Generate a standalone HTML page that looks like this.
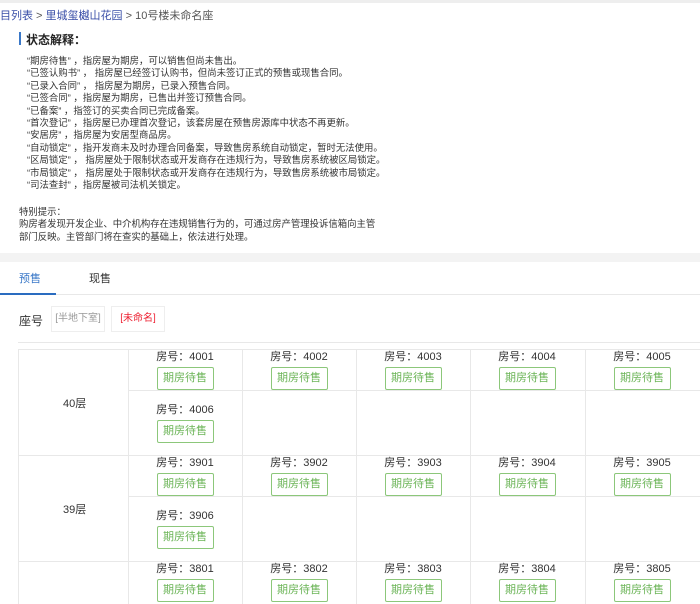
<!DOCTYPE html>
<html><head><meta charset="utf-8"><style>
*{margin:0;padding:0;box-sizing:border-box}
body{width:700px;height:604px;overflow:hidden;background:#fff;font-family:"Liberation Sans","Noto Sans CJK SC",sans-serif;color:#333;position:relative}
.a{position:absolute;white-space:nowrap}
.ln{position:absolute;background:#e8e8e8}
.exp div{height:12.4px;line-height:12.4px;font-size:9.4px;color:#333}
.cell{position:absolute;width:114px;text-align:center;font-size:11px;color:#333}
.btn{display:block;margin:3px auto 0;width:57px;height:23px;border:1px solid #8cc77a;border-radius:2px;color:#6bb457;font-size:11px;line-height:21px}
.fl{position:absolute;font-size:11px;color:#333}
</style></head><body>
<div class="ln" style="left:0;top:0;width:700px;height:3px;background:#eee"></div>
<div class="a" style="left:0;top:7px;font-size:11px;color:#555"><span style="color:#3a4fa8">目列表</span> &gt; <span style="color:#3a4fa8">里城玺樾山花园</span> &gt; 10号楼未命名座</div>
<div class="a" style="left:19px;top:32px;width:2px;height:13px;background:#3a78c8"></div>
<div class="a" style="left:26px;top:31px;font-size:12px;font-weight:bold;color:#222">状态解释：</div>
<div class="a exp" style="left:27px;top:55px">
<div>“期房待售” ，指房屋为期房，可以销售但尚未售出。</div>
<div>“已签认购书” ， 指房屋已经签订认购书，但尚未签订正式的预售或现售合同。</div>
<div>“已录入合同” ， 指房屋为期房，已录入预售合同。</div>
<div>“已签合同” ，指房屋为期房，已售出并签订预售合同。</div>
<div>“已备案” ，指签订的买卖合同已完成备案。</div>
<div>“首次登记” ，指房屋已办理首次登记，该套房屋在预售房源库中状态不再更新。</div>
<div>“安居房” ，指房屋为安居型商品房。</div>
<div>“自动锁定” ，指开发商未及时办理合同备案，导致售房系统自动锁定，暂时无法使用。</div>
<div>“区局锁定” ， 指房屋处于限制状态或开发商存在违规行为，导致售房系统被区局锁定。</div>
<div>“市局锁定” ， 指房屋处于限制状态或开发商存在违规行为，导致售房系统被市局锁定。</div>
<div>“司法查封” ，指房屋被司法机关锁定。</div>
</div>
<div class="a exp" style="left:19px;top:206px">
<div>特别提示：</div>
<div>购房者发现开发企业、中介机构存在违规销售行为的，可通过房产管理投诉信箱向主管</div>
<div>部门反映。主管部门将在查实的基础上，依法进行处理。</div>
</div>
<div class="a" style="left:0;top:253px;width:700px;height:9px;background:#f3f3f3"></div>
<div class="a" style="left:19px;top:270px;font-size:11px;color:#3a78c8">预售</div>
<div class="a" style="left:89px;top:270px;font-size:11px;color:#333">现售</div>
<div class="ln" style="left:0;top:294px;width:700px;height:1px"></div>
<div class="a" style="left:0;top:293px;width:56px;height:2px;background:#2a6cc0"></div>
<div class="a" style="left:19px;top:312px;font-size:12px;color:#333">座号</div>
<div class="a" style="left:51px;top:306px;width:54px;height:26px;border:1px solid #eee;font-size:10px;color:#999;text-align:center;line-height:24px">[半地下室]</div>
<div class="a" style="left:111px;top:306px;width:54px;height:26px;border:1px solid #eee;font-size:10px;color:#e23;text-align:center;line-height:24px">[未命名]</div>
<div class="ln" style="left:18px;top:342px;width:682px;height:1px"></div>
<div class="ln" style="left:18px;top:349px;width:682px;height:1px"></div>
<div class="ln" style="left:18px;top:349px;width:1px;height:255px"></div>
<div class="ln" style="left:128px;top:349px;width:1px;height:255px"></div>
<div class="ln" style="left:242px;top:349px;width:1px;height:255px"></div>
<div class="ln" style="left:356px;top:349px;width:1px;height:255px"></div>
<div class="ln" style="left:470px;top:349px;width:1px;height:255px"></div>
<div class="ln" style="left:585px;top:349px;width:1px;height:255px"></div>
<div class="ln" style="left:128px;top:390px;width:572px;height:1px"></div>
<div class="ln" style="left:18px;top:455px;width:682px;height:1px"></div>
<div class="ln" style="left:128px;top:496px;width:572px;height:1px"></div>
<div class="ln" style="left:18px;top:561px;width:682px;height:1px"></div>
<div class="fl" style="left:63px;top:395px">40层</div>
<div class="fl" style="left:63px;top:501px">39层</div>
<div class="cell" style="left:128px;top:348px">房号：4001<span class="btn">期房待售</span></div>
<div class="cell" style="left:242px;top:348px">房号：4002<span class="btn">期房待售</span></div>
<div class="cell" style="left:356px;top:348px">房号：4003<span class="btn">期房待售</span></div>
<div class="cell" style="left:470px;top:348px">房号：4004<span class="btn">期房待售</span></div>
<div class="cell" style="left:585px;top:348px">房号：4005<span class="btn">期房待售</span></div>
<div class="cell" style="left:128px;top:401px">房号：4006<span class="btn">期房待售</span></div>
<div class="cell" style="left:128px;top:454px">房号：3901<span class="btn">期房待售</span></div>
<div class="cell" style="left:242px;top:454px">房号：3902<span class="btn">期房待售</span></div>
<div class="cell" style="left:356px;top:454px">房号：3903<span class="btn">期房待售</span></div>
<div class="cell" style="left:470px;top:454px">房号：3904<span class="btn">期房待售</span></div>
<div class="cell" style="left:585px;top:454px">房号：3905<span class="btn">期房待售</span></div>
<div class="cell" style="left:128px;top:507px">房号：3906<span class="btn">期房待售</span></div>
<div class="cell" style="left:128px;top:560px">房号：3801<span class="btn">期房待售</span></div>
<div class="cell" style="left:242px;top:560px">房号：3802<span class="btn">期房待售</span></div>
<div class="cell" style="left:356px;top:560px">房号：3803<span class="btn">期房待售</span></div>
<div class="cell" style="left:470px;top:560px">房号：3804<span class="btn">期房待售</span></div>
<div class="cell" style="left:585px;top:560px">房号：3805<span class="btn">期房待售</span></div>
</body></html>
